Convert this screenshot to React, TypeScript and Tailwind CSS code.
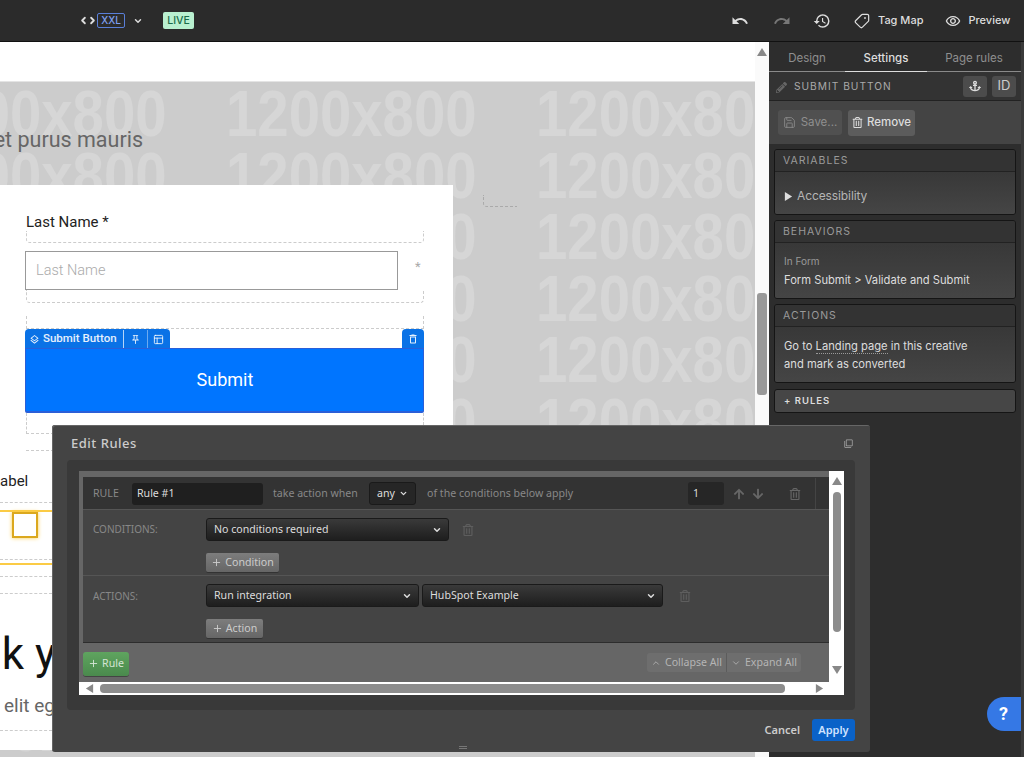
import {
  ChevronDown,
  ChevronLeft,
  ChevronRight,
  ChevronUp,
  PanelsTopLeft,
  Plus,
  Save,
  Tag,
} from "lucide-react";
import { FaAnchor, FaArrowDown, FaArrowUp, FaPencilAlt, FaRegTrashAlt } from "react-icons/fa";
import {
  MdHistory,
  MdOutlineDelete,
  MdOutlineFilterNone,
  MdOutlineLayers,
  MdOutlinePushPin,
  MdOutlineRemoveRedEye,
  MdRedo,
  MdUndo,
} from "react-icons/md";

const rows = [0, 1, 2, 3, 4, 5, 6, 7, 8, 9, 10];
const cols = [0, 1, 2];

const Placeholder = () => (
  <div className="absolute inset-0 -left-[84px] top-[2px] overflow-hidden font-['Liberation_Sans',sans-serif] text-[64px] font-bold leading-[61.5px] text-[#d6d6d6]">
    {rows.map((r) => (
      <div key={r} className="flex h-[61.5px]">
        {cols.map((c) => (
          <div key={c} className="w-[310px] shrink-0 origin-left scale-x-[0.88] whitespace-nowrap">
            1200x800
          </div>
        ))}
      </div>
    ))}
  </div>
);

const Triangle = ({ dir, className }: { dir: "up" | "down" | "left" | "right"; className: string }) => {
  const pts = { up: "5,1 10,9 0,9", down: "0,1 10,1 5,9", left: "9,0 9,10 1,5", right: "1,0 1,10 9,5" }[dir];
  return (
    <svg viewBox="0 0 10 10" className={className}>
      <polygon points={pts} fill="currentColor" />
    </svg>
  );
};

const Section = ({ title, children, bodyHeight }: { title: string; children: React.ReactNode; bodyHeight: string }) => (
  <div className="overflow-hidden rounded-[3px] border border-[#151515]">
    <div className="flex h-[22px] items-center bg-[#333] px-2 text-[10.5px] tracking-[1px] text-[#9a9a9a] border-b border-[#222]">{title}</div>
    <div className={`bg-gradient-to-b from-[#383838] to-[#454545] px-[9px] ${bodyHeight}`}>{children}</div>
  </div>
);

const RightPanel = () => (
  <div className="flex w-[255px] shrink-0 bg-[#2d2d2d] font-['Inter',sans-serif]">
    <div className="w-[252px]">
      <div className="flex h-[30px] items-center border-b border-[#8a8a8a] pt-[5px] text-[11.5px] text-[#8f8f8f]">
        <div className="w-[76px] text-center">Design</div>
        <div className="-mb-px flex h-[25px] w-[82px] items-center justify-center border-b border-[#ddd] font-medium text-[#ddd]">Settings</div>
        <div className="w-[94px] text-center">Page rules</div>
      </div>
      <div className="flex h-[29px] items-center border-b border-[#222] bg-[#333] pl-[7px] pr-[5px] pt-[2px]">
        <FaPencilAlt className="size-[11px] text-[#666]" />
        <div className="ml-[7px] text-[10.2px] tracking-[1px] text-[#aaa]">SUBMIT BUTTON</div>
        <div className="-mt-[2px] ml-auto flex gap-[5px]">
          <div className="flex h-[21px] w-[24px] items-center justify-center rounded-[3px] bg-[#4c4c4c] text-[#ddd]">
            <FaAnchor className="size-[12px]" />
          </div>
          <div className="flex h-[21px] w-[24px] items-center justify-center rounded-[3px] bg-[#4c4c4c] text-[13px] text-[#ccc]">ID</div>
        </div>
      </div>
      <div className="flex h-[43px] items-center gap-[6px] bg-[#444] pl-[9px] text-[11.5px]">
        <div className="flex h-[25px] w-[64px] items-center justify-center gap-[5px] rounded-[3px] bg-[#505050] text-[#8f8f8f]">
          <Save className="size-[13px]" strokeWidth={1.5} />
          Save...
        </div>
        <div className="flex h-[26px] w-[67px] items-center justify-center gap-[4px] rounded-[3px] bg-[#5c5c5c] font-medium text-[#ddd]">
          <FaRegTrashAlt className="size-[11px]" />
          Remove
        </div>
      </div>
      <div className="flex flex-col gap-[5px] pl-[5px] pr-[5px] pt-[5px]">
        <Section title="VARIABLES" bodyHeight="h-[42px]">
          <div className="flex h-full items-center gap-[4px] pt-[6px] text-[12px] tracking-[-0.1px] text-[#b5b5b5]">
            <Triangle dir="right" className="size-[9px] text-[#ddd]" />
            Accessibility
          </div>
        </Section>
        <Section title="BEHAVIORS" bodyHeight="h-[55px]">
          <div className="pt-[12px] text-[10px] leading-[13px] text-[#999]">In Form</div>
          <div className="pt-[4px] text-[11.2px] leading-[16px] text-[#ddd]">Form Submit &gt; Validate and Submit</div>
        </Section>
        <Section title="ACTIONS" bodyHeight="h-[55px]">
          <div className="pt-[10px] text-[11.2px] leading-[18px] text-[#ddd]">
            Go to <span className="border-b border-dotted border-[#999]">Landing page</span> in this creative
            <br />
            and mark as converted
          </div>
        </Section>
        <div className="mt-[1px] flex h-[24px] items-center rounded-[3px] border border-[#151515] bg-[#464646] px-[9px] text-[9.5px] font-semibold tracking-[1px] text-[#ddd]">
          + RULES
        </div>
      </div>
    </div>
    <div className="w-[3px] bg-[#3a3a3a]" />
  </div>
);

const Dashes = ({ className }: { className: string }) => (
  <div className={`h-px w-[52px] border-b border-dashed border-[#ccc] ${className}`} />
);

const Canvas = () => (
  <div className="flex w-[769px] shrink-0 overflow-hidden bg-white">
    <div className="w-[755px] shrink-0">
      <div className="h-[40px] border-b border-[#e4e4e4]" />
      <div className="relative h-[675px] overflow-hidden bg-[#ccc]">
        <Placeholder />
        <div className="relative flex h-[70px] items-end justify-start">
          <div className="flex h-[24px] w-[143px] justify-end overflow-hidden whitespace-nowrap font-['Roboto',sans-serif] text-[21.5px] leading-[24px] text-[#666]">
            Lorem ipsum dolor sit amet purus mauris
          </div>
        </div>
        <div className="relative flex items-start pt-[33px]">
          <div className="h-[565px] w-[453px] bg-white font-['Roboto',sans-serif] text-[#222]">
            <div className="pl-[26px] pt-[25px] text-[15px] leading-[24px]">Last Name *</div>
            <div className="ml-[26px] mt-[-3px] h-[12px] w-[398px] rounded-b border-x border-b border-dashed border-[#ccc]" />
            <div className="mt-[8px] flex items-center pl-[25px]">
              <div className="flex h-[39px] w-[373px] items-center border border-[#999] pl-[10px] text-[14.5px] font-light text-[#aaa]">Last Name</div>
              <div className="ml-[17px] -mt-[7px] text-[13px] text-[#aaa]">*</div>
            </div>
            <div className="ml-[26px] h-[13px] w-[398px] rounded-b border-x border-b border-dashed border-[#ccc]" />
            <div className="ml-[26px] mt-[13px] h-[13px] w-[398px] border-x border-b border-dashed border-[#ccc]" />
            <div className="ml-[25px] flex h-[19px] w-[399px] justify-between">
              <div className="flex rounded-t-[4px] bg-[#0a72e6] pt-[1px] text-[11.5px] font-medium text-white/90">
                <div className="flex items-center gap-[3px] border-r border-white/70 pl-[4px] pr-[6px]">
                  <MdOutlineLayers className="size-[11px]" />
                  Submit Button
                </div>
                <div className="flex w-[24px] items-center justify-center border-r border-white/40">
                  <MdOutlinePushPin className="size-[11px]" />
                </div>
                <div className="flex w-[22px] items-center justify-center">
                  <PanelsTopLeft className="size-[11px]" />
                </div>
              </div>
              <div className="flex w-[22px] items-center justify-center rounded-t-[4px] bg-[#0a72e6] text-white/90">
                <MdOutlineDelete className="size-[12px]" />
              </div>
            </div>
            <div className="ml-[25px] flex h-[65px] w-[399px] items-center justify-center rounded-b-[2px] border border-b-2 border-[#2a5fd8] bg-[#0075ff] pb-[2px] pl-[1px] text-[18px] text-white">
              Submit
            </div>
            <div className="ml-[26px] h-[21px] w-[398px] border-x border-b border-dashed border-[#ccc]" />
            <div className="ml-[26px] h-[17px] w-[398px] border-b border-dashed border-[#ccc]" />
            <div className="-ml-[8px] mt-[18px] text-[15px] leading-[24px] text-[#222]">Label</div>
            <Dashes className="mt-[9px]" />
            <div className="mt-[7px] flex h-[55px] w-[52px] flex-col items-start border-y-2 border-[#fbcb45] pl-[12px]">
              <div className="size-[26px] border-2 border-[#dba81e] bg-white shadow-[0_0_4px_#fbcb45]" />
              <div className="-ml-[12px] mt-[21px] h-px w-[52px] border-b border-dashed border-[#ccc]" />
            </div>
            <Dashes className="mt-[11px]" />
            <Dashes className="mt-[16px]" />
            <div className="-ml-[97px] mt-[30px] whitespace-nowrap text-[44px] leading-[60px] text-[#111]">Thank you</div>
            <div className="ml-[4px] mt-[10px] whitespace-nowrap text-[19px] leading-[24px] text-[#666]">elit eget</div>
            <Dashes className="mt-[12px]" />
          </div>
          <div className="ml-[30px] mt-[10px] h-[12px] w-[34px] rounded-bl border-b border-l border-dashed border-[#aaa]" />
        </div>
      </div>
    </div>
    <div className="relative flex w-[14px] shrink-0 flex-col items-center bg-[#fafafa] pt-[5px]">
      <Triangle dir="up" className="size-[10px] text-[#888]" />
      <div className="mt-[236px] h-[102px] w-[10px] rounded-[3px] bg-[#999]" />
    </div>
  </div>
);

const Select = ({ label, w }: { label: string; w: string }) => (
  <div className={`flex h-[23px] items-center justify-between rounded-[3px] border border-[#1a1a1a] bg-gradient-to-b from-[#3a3a3a] to-[#1e1e1e] pl-[7px] pr-[6px] text-[10.6px] text-[#ddd] ${w}`}>
    {label}
    <ChevronDown className="size-[10px]" strokeWidth={3.5} />
  </div>
);

const GrayButton = ({ label, w }: { label: string; w: string }) => (
  <div className={`flex h-[19px] items-center justify-center gap-[3px] rounded-[2px] bg-gradient-to-b from-[#7d7d7d] to-[#666] text-[10.6px] text-[#ccc] shadow-[0_1px_0_#333] ${w}`}>
    <Plus className="size-[11px]" />
    {label}
  </div>
);

const Modal = () => (
  <div className="absolute left-[52px] top-[425px] h-[327px] w-[818px] rounded-[3px] bg-[#444] font-['Noto_Sans',sans-serif] shadow-[inset_1px_1px_0_#666]">
    <div className="flex h-[35px] items-center justify-between pl-[19px] pr-[17px] pt-[2px]">
      <div className="text-[13px] font-medium tracking-[0.5px] text-[#ccc]">Edit Rules</div>
      <MdOutlineFilterNone className="size-[9px] text-[#aaa]" />
    </div>
    <div className="mx-[15px] h-[250px] rounded-[4px] bg-[#393939] px-[12px] pt-[11px]">
      <div className="flex h-[224px] w-[765px] flex-col bg-white">
        <div className="flex h-[211px]">
          <div className="w-[750px] bg-[#666] pl-[4px] pt-[6px]">
            <div className="h-[166px] border-b border-[#2d2d2d] bg-[#444]">
              <div className="flex h-[33px] items-center border-b border-[#555] bg-[#333] pt-[1px] text-[10.6px] text-[#888]">
                <div className="w-[49px] pl-[10px]">RULE</div>
                <div className="flex h-[22px] w-[131px] items-center rounded-[3px] bg-[#1f1f1f] pl-[5px] text-[#ddd]">Rule #1</div>
                <div className="ml-[10px] w-[96px]">take action when</div>
                <div className="flex h-[23px] w-[47px] items-center justify-between rounded-[3px] border border-[#1a1a1a] bg-[#262626] px-[7px] text-[#ddd]">
                  any
                  <ChevronDown className="size-[9px]" strokeWidth={3.5} />
                </div>
                <div className="ml-[11px] w-[261px]">of the conditions below apply</div>
                <div className="flex h-[23px] w-[36px] items-center rounded-[3px] bg-[#262626] pl-[5px] text-[#ddd]">1</div>
                <FaArrowUp className="ml-[9px] size-[12px] text-[#666]" />
                <FaArrowDown className="ml-[7px] size-[12px] text-[#666]" />
                <FaRegTrashAlt className="ml-[25px] size-[12px] text-[#666]" />
                <div className="ml-[14px] h-full w-px bg-[#444]" />
              </div>
              <div className="flex h-[66px] border-b border-[#555]">
                <div className="w-[123px] pl-[10px] pt-[11px] text-[10px] leading-[16px] text-[#888]">CONDITIONS:</div>
                <div className="pt-[8px]">
                  <div className="flex items-center">
                    <Select label="No conditions required" w="w-[243px]" />
                    <FaRegTrashAlt className="ml-[13px] size-[12px] text-[#5e5e5e]" />
                  </div>
                  <div className="mt-[12px]">
                    <GrayButton label="Condition" w="w-[73px]" />
                  </div>
                </div>
              </div>
              <div className="flex h-[66px]">
                <div className="w-[123px] pl-[10px] pt-[12px] text-[10px] leading-[16px] text-[#888]">ACTIONS:</div>
                <div className="pt-[8px]">
                  <div className="flex items-center gap-[3px]">
                    <Select label="Run integration" w="w-[213px]" />
                    <Select label="HubSpot Example" w="w-[241px]" />
                    <FaRegTrashAlt className="ml-[13px] size-[12px] text-[#5e5e5e]" />
                  </div>
                  <div className="mt-[12px]">
                    <GrayButton label="Action" w="w-[57px]" />
                  </div>
                </div>
              </div>
            </div>
            <div className="flex h-[39px] items-center justify-between pr-[28px] text-[10.6px] text-[#b5b5b5]">
              <div className="mt-[2px] flex h-[24px] w-[46px] items-center justify-center gap-[3px] rounded-[3px] bg-gradient-to-b from-[#5fa45f] to-[#4a8a4d] text-[#d5e5d5] shadow-[0_1px_0_#444]">
                <Plus className="size-[11px]" />
                Rule
              </div>
              <div className="flex h-[19px] items-center rounded-[3px] bg-[#6e6e6e]">
                <div className="flex h-full w-[80px] items-center justify-center gap-[4px] border-r border-[#5c5c5c]">
                  <ChevronUp className="size-[10px]" />
                  Collapse All
                </div>
                <div className="flex h-full w-[74px] items-center justify-center gap-[4px]">
                  <ChevronDown className="size-[10px]" />
                  Expand All
                </div>
              </div>
            </div>
          </div>
          <div className="flex w-[15px] flex-col items-center pt-[5px]">
            <Triangle dir="up" className="size-[10px] text-[#888]" />
            <div className="mt-[6px] h-[140px] w-[8px] shrink-0 rounded-[4px] bg-[#8c8c8c]" />
            <Triangle dir="down" className="mt-[33px] size-[10px] text-[#888]" />
          </div>
        </div>
        <div className="flex h-[13px] items-center pl-[6px]">
          <Triangle dir="left" className="size-[9px] text-[#888]" />
          <div className="ml-[6px] h-[9px] w-[685px] rounded-[4px] bg-[#8c8c8c]" />
          <Triangle dir="right" className="ml-[30px] size-[9px] text-[#888]" />
        </div>
      </div>
    </div>
    <div className="relative flex h-[42px] items-center justify-end gap-[12px] pb-[2px] pr-[15px]">
      <div className="text-[11px] font-semibold text-[#ccc]">Cancel</div>
      <div className="flex h-[22px] w-[43px] items-center justify-center rounded-[3px] bg-[#0a62c8] text-[11px] font-semibold text-[#cfe3ff]">Apply</div>
      <div className="absolute bottom-[3px] left-[407px] h-[3px] w-[8px] border-y border-[#777]" />
    </div>
  </div>
);

const App = () => {
  return (
    <div className="relative flex h-[757px] w-[1024px] flex-col overflow-hidden bg-[#2d2d2d]">
      <div className="flex h-[42px] shrink-0 items-center border-b border-[#111] bg-[#2b2b2b] font-['Inter',sans-serif] text-[#ddd]">
        <div className="ml-[78px] flex items-center">
          <ChevronLeft className="-mr-[2px] size-[11px]" strokeWidth={4} />
          <ChevronRight className="size-[11px]" strokeWidth={4} />
        </div>
        <div className="ml-[-1px] flex h-[15px] w-[28px] items-center justify-center rounded-[2px] border border-[#5a7fd8] text-[10px] font-medium text-[#7fa0f0]">XXL</div>
        <ChevronDown className="ml-[8px] size-[10px]" strokeWidth={3.5} />
        <div className="ml-[20px] flex h-[17px] w-[31px] items-center justify-center rounded-[2px] bg-[#b9f0d0] text-[10.5px] font-medium text-[#1a6b4a]">LIVE</div>
        <MdUndo className="ml-[537px] size-[18px]" />
        <MdRedo className="ml-[24px] size-[18px] text-[#777]" />
        <MdHistory className="ml-[22px] size-[18px]" />
        <Tag className="ml-[23px] size-[16px] -scale-x-100" strokeWidth={1.8} />
        <div className="ml-[8px] text-[11px] font-medium">Tag Map</div>
        <MdOutlineRemoveRedEye className="ml-[22px] size-[16px]" />
        <div className="ml-[7px] text-[11px] font-medium">Preview</div>
      </div>
      <div className="flex min-h-0 flex-1">
        <Canvas />
        <RightPanel />
      </div>
      <Modal />
      <div className="absolute left-[987px] top-[697px] flex h-[34px] w-[34px] items-center justify-center rounded-l-full bg-[#3578e5] pb-[1px] pr-[1px] font-['Roboto',sans-serif] text-[18px] font-bold text-white">?</div>
    </div>
  );
};

export default App;
